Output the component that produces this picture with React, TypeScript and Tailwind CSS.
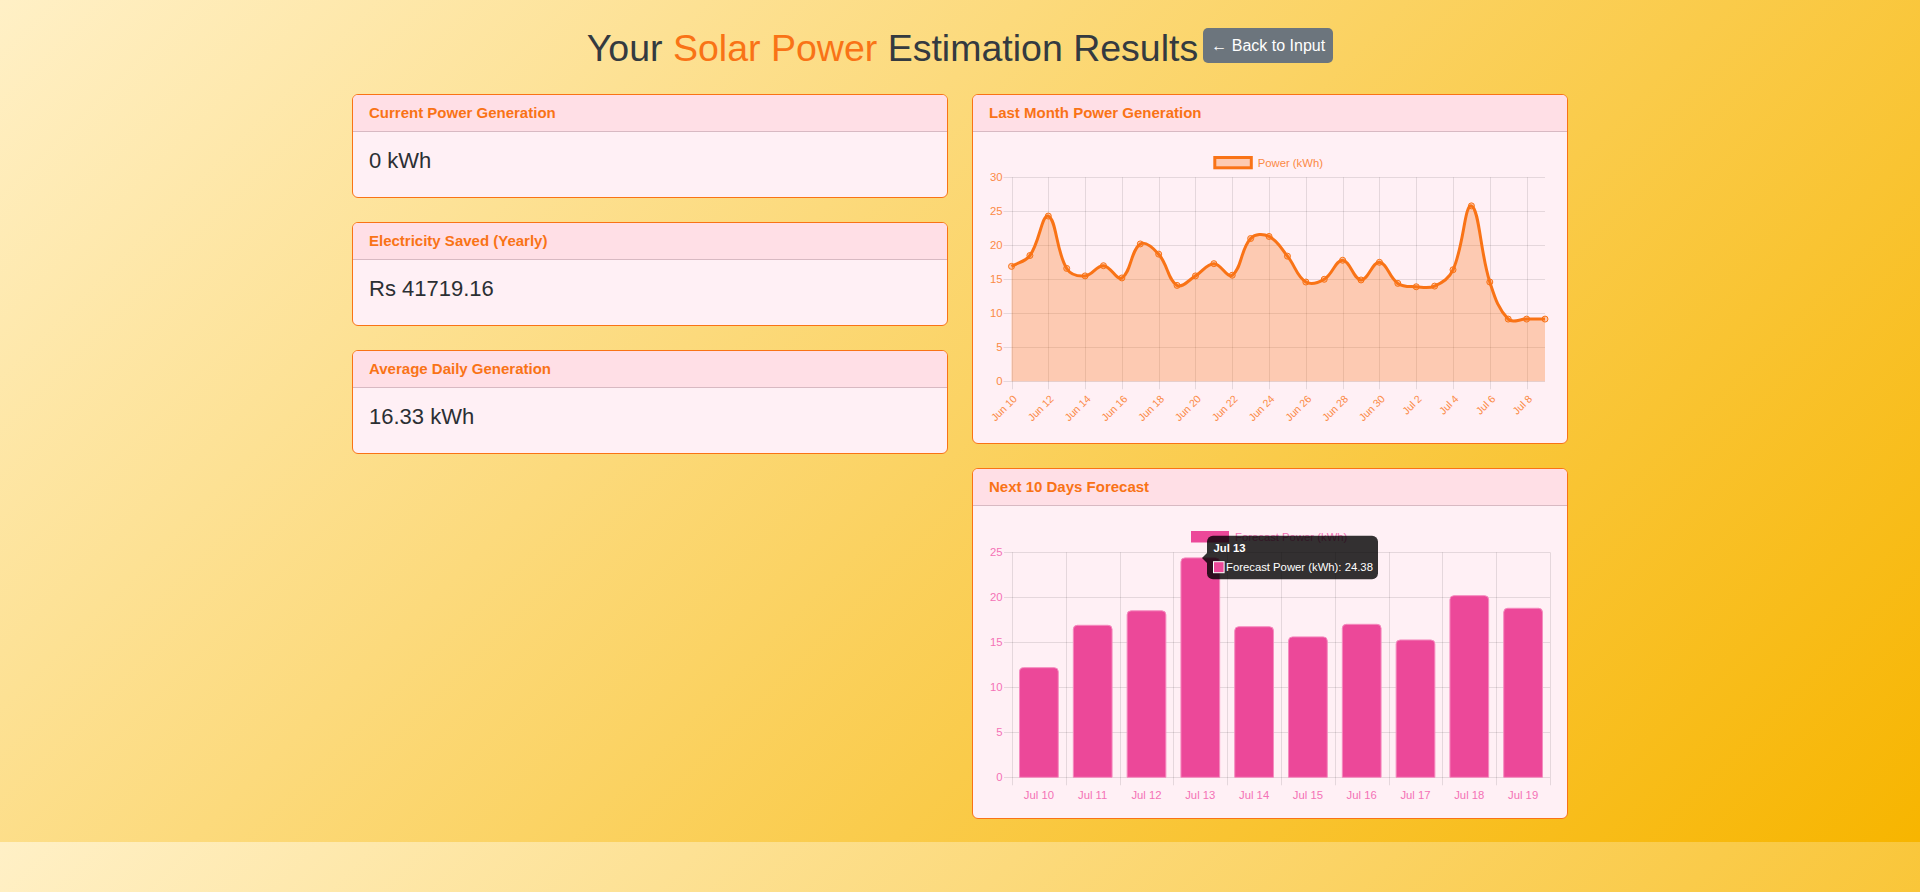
import React from "react";

const lineData = [
  16.9, 18.5, 24.3, 16.6, 15.5, 17.0, 15.2, 20.2, 18.7, 14.1, 15.5, 17.3, 15.6, 21.0, 21.3,
  18.4, 14.6, 15.0, 17.8, 14.9, 17.5, 14.4, 13.9, 14.0, 16.4, 25.8, 14.6, 9.15, 9.15, 9.15,
];
const lineLabels = (() => {
  const out: string[] = [];
  for (let d = 10; d <= 30; d++) out.push(`Jun ${d}`);
  for (let d = 1; d <= 9; d++) out.push(`Jul ${d}`);
  return out;
})();

const barData = [12.18, 16.89, 18.5, 24.38, 16.73, 15.6, 17.0, 15.26, 20.18, 18.78];
const barLabels = ["Jul 10", "Jul 11", "Jul 12", "Jul 13", "Jul 14", "Jul 15", "Jul 16", "Jul 17", "Jul 18", "Jul 19"];

const GRID = "rgba(0,0,0,0.1)";
const FS = 11.3;

function crisp(v: number) {
  return Math.round(v) + 0.5;
}

function LineChart() {
  const W = 562;
  const H = 279;
  const x0 = 22.5;
  const x1 = 556;
  const step = (x1 - x0) / 29;
  const top = 29.3;
  const bottom = 233.3;
  const yv = (v: number) => bottom - 6.8 * v;
  const pts = lineData.map((v, i) => ({ x: x0 + i * step, y: yv(v) }));
  const clampY = (y: number) => Math.max(top, Math.min(bottom, y));
  const cps = pts.map((p, i) => {
    const prev = pts[i - 1] ?? p;
    const next = pts[i + 1] ?? p;
    const d01 = Math.hypot(p.x - prev.x, p.y - prev.y);
    const d12 = Math.hypot(next.x - p.x, next.y - p.y);
    let s01 = d01 / (d01 + d12);
    let s12 = d12 / (d01 + d12);
    if (!isFinite(s01)) s01 = 0;
    if (!isFinite(s12)) s12 = 0;
    const fa = 0.4 * s01;
    const fb = 0.4 * s12;
    return {
      prev: { x: p.x - fa * (next.x - prev.x), y: clampY(p.y - fa * (next.y - prev.y)) },
      next: { x: p.x + fb * (next.x - prev.x), y: clampY(p.y + fb * (next.y - prev.y)) },
    };
  });
  let d = `M ${pts[0].x} ${pts[0].y}`;
  for (let i = 1; i < pts.length; i++) {
    const a = cps[i - 1].next;
    const b = cps[i].prev;
    d += ` C ${a.x} ${a.y} ${b.x} ${b.y} ${pts[i].x} ${pts[i].y}`;
  }
  const fillD = `${d} L ${pts[pts.length - 1].x} ${bottom} L ${pts[0].x} ${bottom} Z`;
  const tickColor = "#fb8a45";
  const yTicks = [0, 5, 10, 15, 20, 25, 30];
  return (
    <svg width={W} height={H} className="block">
      {/* legend */}
      <rect x={225.8} y={9.5} width={36.5} height={10.3} fill="rgba(249,115,22,0.3)" stroke="#f97316" strokeWidth={3} />
      <text x={268.7} y={14.8} fontSize={FS} fill={tickColor} dominantBaseline="central">
        Power (kWh)
      </text>
      {/* horizontal grid */}
      {yTicks.map((v) => (
        <g key={v}>
          <line x1={14.5} x2={x1} y1={crisp(yv(v))} y2={crisp(yv(v))} stroke={GRID} strokeWidth={1} />
          <text x={13.5} y={yv(v)} fontSize={FS} fill={tickColor} textAnchor="end" dominantBaseline="central">
            {v}
          </text>
        </g>
      ))}
      {/* vertical grid */}
      {lineLabels.map((lab, i) =>
        i % 2 === 0 ? (
          <g key={lab}>
            <line x1={crisp(x0 + i * step)} x2={crisp(x0 + i * step)} y1={top} y2={bottom + 8} stroke={GRID} strokeWidth={1} />
            <g transform={`translate(${x0 + i * step - 1} ${bottom + 11}) rotate(-45)`}>
              <text x={0} y={6.2} fontSize={10.5} fill={tickColor} textAnchor="end" dominantBaseline="central">
                {lab}
              </text>
            </g>
          </g>
        ) : null
      )}
      <path d={fillD} fill="rgba(249,115,22,0.3)" />
      <path d={d} fill="none" stroke="#f97316" strokeWidth={3} strokeLinejoin="round" />
      {pts.map((p, i) => (
        <circle key={i} cx={p.x} cy={p.y} r={3} fill="rgba(249,115,22,0.3)" stroke="#f97316" strokeWidth={1} />
      ))}
    </svg>
  );
}

function BarChart() {
  const W = 562;
  const H = 280;
  const x0 = 23;
  const x1 = 561;
  const cw = (x1 - x0) / 10;
  const top = 30.3;
  const bottom = 255.3;
  const yv = (v: number) => bottom - 9 * v;
  const tickColor = "#f472b6";
  const yTicks = [0, 5, 10, 15, 20, 25];
  const bw = cw * 0.72;
  const r = 4;
  return (
    <svg width={W} height={H} className="block">
      {/* legend */}
      <rect x={202.5} y={9.5} width={37} height={10.5} fill="#ec4899" stroke="#ec4899" strokeWidth={1} />
      <text x={246} y={14.8} fontSize={FS} fill={tickColor} dominantBaseline="central">
        Forecast Power (kWh)
      </text>
      {yTicks.map((v) => (
        <g key={v}>
          <line x1={15} x2={x1} y1={crisp(yv(v))} y2={crisp(yv(v))} stroke={GRID} strokeWidth={1} />
          <text x={13.5} y={yv(v)} fontSize={FS} fill={tickColor} textAnchor="end" dominantBaseline="central">
            {v}
          </text>
        </g>
      ))}
      {Array.from({ length: 11 }).map((_, k) => (
        <line key={k} x1={crisp(x0 + k * cw)} x2={crisp(x0 + k * cw)} y1={top} y2={bottom + 8} stroke={GRID} strokeWidth={1} />
      ))}
      {barData.map((v, k) => {
        const cx = x0 + (k + 0.5) * cw;
        const bx = cx - bw / 2;
        const ty = yv(v);
        const p = `M ${bx} ${bottom} V ${ty + r} Q ${bx} ${ty} ${bx + r} ${ty} H ${bx + bw - r} Q ${bx + bw} ${ty} ${bx + bw} ${ty + r} V ${bottom} Z`;
        return <path key={k} d={p} fill="#ec4899" stroke="#f58bbf" strokeWidth={1} />;
      })}
      {barLabels.map((lab, k) => (
        <text key={lab} x={x0 + (k + 0.5) * cw} y={272.5} fontSize={FS} fill={tickColor} textAnchor="middle" dominantBaseline="central">
          {lab}
        </text>
      ))}
      {/* tooltip */}
      <g>
        <path d="M 218 30.9 L 213 35.9 L 218 40.9 Z" fill="rgba(0,0,0,0.8)" />
        <rect x={218} y={13.7} width={171} height={43.6} rx={6} fill="rgba(0,0,0,0.8)" />
        <text x={224.5} y={25.5} fontSize={FS} fontWeight={700} fill="#fff" dominantBaseline="central">
          Jul 13
        </text>
        <rect x={224.5} y={39.7} width={10.6} height={11} fill="#ec4899" stroke="#fff" strokeWidth={1} />
        <text x={237} y={45} fontSize={FS} fill="#fff" dominantBaseline="central">
          Forecast Power (kWh): 24.38
        </text>
      </g>
    </svg>
  );
}

function Card({ title, children }: { title: string; children: React.ReactNode }) {
  return (
    <div className="overflow-hidden rounded-[6px] border border-[#f97316] bg-[#fff0f5]">
      <div className="border-b border-[#d8b9c2] bg-[#ffdfe6] px-4 py-[7px] text-[15px] font-bold leading-[22px] text-[#f97316]">
        {title}
      </div>
      <div className="p-4">{children}</div>
    </div>
  );
}

function StatCard({ title, value }: { title: string; value: string }) {
  return (
    <Card title={title}>
      <div className="mb-[7px] text-[22px] leading-[26px] text-[#2b2f33]">{value}</div>
    </Card>
  );
}

export default function App() {
  return (
    <div className="min-h-screen w-full bg-[linear-gradient(135deg,#fff0c6_0%,#f7b500_100%)] bg-size-[100%_842px] bg-repeat font-['Liberation_Sans',Arial,sans-serif]">
      <div className="mx-auto w-[1216px] pb-6 pt-[26px]">
        <div className="flex items-start justify-center gap-[5px]">
          <h1 className="text-[37.5px] font-normal leading-[44px] text-[#343a40]">
            Your <span className="text-[#f97316]">Solar Power</span> Estimation Results
          </h1>
          <button className="mt-[2px] flex h-[35px] w-[130px] items-center justify-center rounded-[5px] bg-[#6c757d] text-[16px] leading-none text-white">
            ← Back to Input
          </button>
        </div>
        <div className="mt-6 grid grid-cols-2 items-start gap-6">
          <div className="flex flex-col gap-6">
            <StatCard title="Current Power Generation" value="0 kWh" />
            <StatCard title="Electricity Saved (Yearly)" value="Rs 41719.16" />
            <StatCard title="Average Daily Generation" value="16.33 kWh" />
          </div>
          <div className="flex flex-col gap-6">
            <Card title="Last Month Power Generation">
              <LineChart />
            </Card>
            <Card title="Next 10 Days Forecast">
              <BarChart />
            </Card>
          </div>
        </div>
      </div>
    </div>
  );
}
